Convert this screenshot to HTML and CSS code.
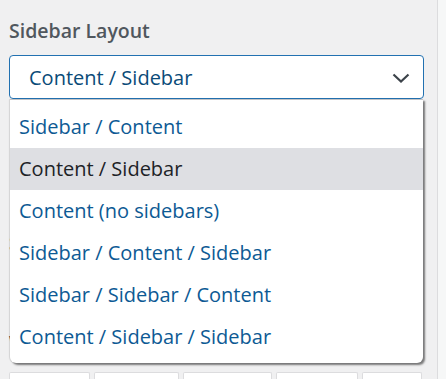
FILE: index.html
```html
<!DOCTYPE html>
<html lang="en">
<head>
<meta charset="utf-8">
<title>Sidebar Layout</title>
<link rel="stylesheet" href="styles.css">
</head>
<body>
<div class="page">
  <div class="panel">
    <div class="field-label">Sidebar Layout</div>
    <div class="select-wrap">
      <div class="select">
        <span class="select-value">Content / Sidebar</span>
        <svg class="chevron" width="18" height="10" viewBox="0 0 18 10" aria-hidden="true">
          <path d="M1.5 1.5 L9 8.5 L16.5 1.5" fill="none" stroke="#3c434a" stroke-width="2.2"/>
        </svg>
      </div>
      <ul class="dropdown">
        <li class="option">Sidebar / Content</li>
        <li class="option selected">Content / Sidebar</li>
        <li class="option">Content (no sidebars)</li>
        <li class="option">Sidebar / Content / Sidebar</li>
        <li class="option">Sidebar / Sidebar / Content</li>
        <li class="option">Content / Sidebar / Sidebar</li>
      </ul>
    </div>
    <div class="field-label behind first">Sidebar Width</div>
    <div class="field-label behind second">Widths</div>
    <div class="boxes">
      <div class="box w1"></div>
      <div class="box w2"></div>
      <div class="box w3"></div>
      <div class="box w4"></div>
      <div class="box w5"></div>
    </div>
  </div>
  <div class="strip"></div>
</div>
</body>
</html>
```

FILE: styles.css
```css
* { box-sizing: border-box; }

html, body {
  margin: 0;
  padding: 0;
  width: 446px;
  height: 379px;
  overflow: hidden;
  background: #f0f0f1;
  font-family: "Open Sans", "Noto Sans", "Liberation Sans", sans-serif;
}

.page {
  display: flex;
  width: 446px;
  height: 379px;
}

.panel {
  width: 437px;
  height: 379px;
  overflow: hidden;
  padding: 18px 0 0 9px;
}

.strip {
  width: 9px;
  border-left: 1px solid #dcdcde;
  background: #f6f7f7;
}

.field-label {
  font-size: 19.5px;
  line-height: 26px;
  font-weight: 600;
  color: #50575e;
}

.select-wrap {
  position: relative;
  margin-top: 11px;
  width: 415px;
}

.select {
  height: 44px;
  border: 1px solid #2271b1;
  border-radius: 4px;
  background: #fff;
  display: flex;
  align-items: center;
  justify-content: space-between;
  padding: 1px 13px 0 19px;
}

.select-value {
  font-size: 20px;
  color: #0a4b78;
}

.chevron { display: block; }

.dropdown {
  position: absolute;
  top: 44px;
  left: 1px;
  width: 413px;
  margin: 0;
  padding: 6px 0 5px;
  list-style: none;
  background: #fff;
  border-top: 1px solid #c3c4c7;
  border-radius: 0 0 6px 6px;
  box-shadow: 2px 2px 2px rgba(0, 0, 0, 0.5), -1px 0 1px rgba(0, 0, 0, 0.12);
  z-index: 2;
}

.option {
  height: 42px;
  line-height: 42px;
  padding-left: 9px;
  font-size: 20px;
  color: #0d5a94;
  white-space: nowrap;
}

.option.selected {
  background: #dedfe3;
  color: #1d2327;
}

.behind { color: #3c434a; }
.behind.first { margin-top: 131px; }
.behind.second { margin-top: 74px; }

.boxes {
  display: flex;
  gap: 4px;
  margin-top: 16px;
}

.box {
  height: 7px;
  background: #fff;
  border: 1px solid #dcdcde;
  border-bottom: none;
  border-radius: 2px 2px 0 0;
}
.w1 { width: 81px; }
.w2 { width: 85px; }
.w3 { width: 89px; }
.w4 { width: 82px; }
.w5 { width: 60px; }
```
